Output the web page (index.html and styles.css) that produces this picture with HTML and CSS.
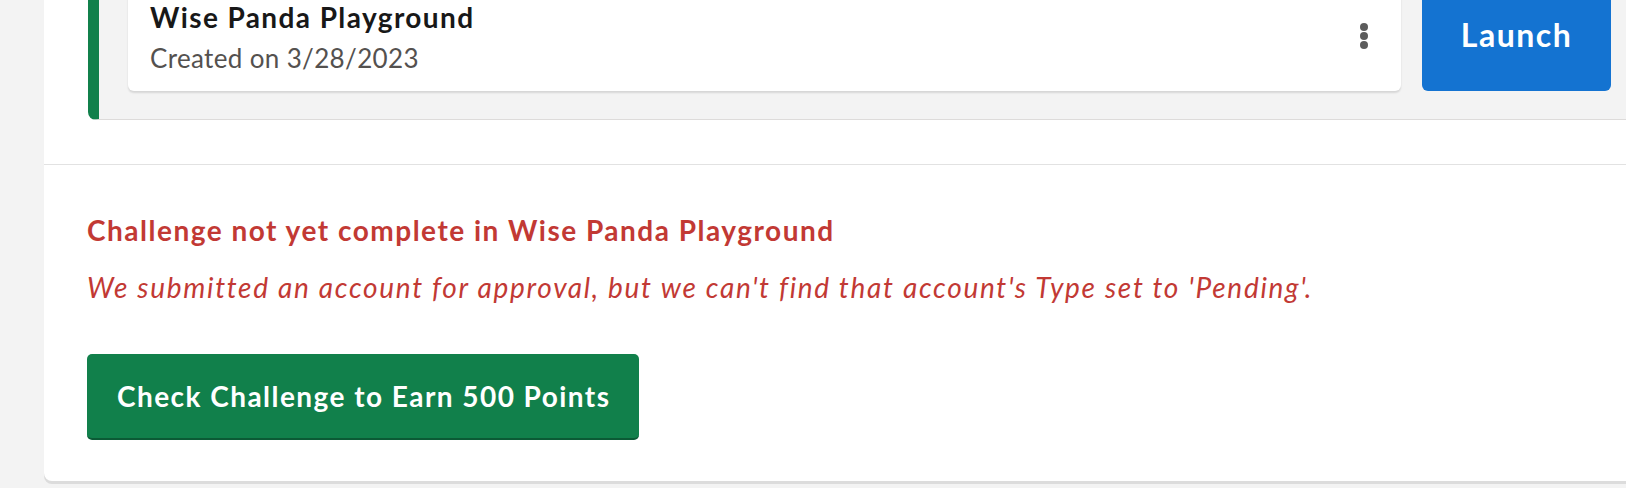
FILE: index.html
```html
<!DOCTYPE html>
<html lang="en">
<head>
<meta charset="utf-8">
<title>Challenge</title>
<link rel="stylesheet" href="styles.css">
</head>
<body>
<div class="card">
  <section class="org-section">
    <div class="org">
      <div class="org-card">
        <div class="org-info">
          <div class="org-name">Wise Panda Playground</div>
          <div class="org-date">Created on 3/28/2023</div>
        </div>
        <button class="kebab" aria-label="More actions"><span></span><span></span><span></span></button>
      </div>
      <button class="launch">Launch</button>
    </div>
  </section>
  <section class="check-section">
    <h3 class="err-title">Challenge not yet complete in Wise Panda Playground</h3>
    <p class="err-msg">We submitted an account for approval, but we can't find that account's Type set to 'Pending'.</p>
    <button class="check-btn">Check Challenge to Earn 500 Points</button>
  </section>
</div>
</body>
</html>
```
FILE: styles.css
```css
html, body {
  margin: 0;
  background: #f3f3f3;
  overflow: hidden;
}
body {
  font-family: Lato, "Noto Sans", sans-serif;
  height: 488px;
}
.card {
  margin: -48px 0 0 44px;
  width: 1640px;
  background: #fff;
  border-radius: 0 0 8px 8px;
  box-shadow: 0 3px 0 #dcdcdc;
}
.org-section {
  padding: 0 0 44px 44px;
  border-bottom: 1px solid #e2e2e2;
}
.org {
  display: flex;
  gap: 21px;
  background: #f3f3f3;
  border: 1px solid #dddbda;
  border-left: 11px solid #11804b;
  border-radius: 0 0 0 8px;
  padding: 28px 28px 28px 29px;
}
.org-card {
  flex: 0 0 1273px;
  height: 110px;
  box-sizing: border-box;
  background: #fff;
  border-radius: 6px;
  box-shadow: 0 2px 2px rgba(0, 0, 0, 0.12);
  display: flex;
  justify-content: space-between;
  align-items: center;
  padding: 0 33px 0 22px;
}
.org-info {
  align-self: flex-start;
  padding-top: 18px;
}
.org-name {
  font-weight: 700;
  font-size: 28px;
  line-height: 36px;
  letter-spacing: 1.4px;
  color: #181818;
}
.org-date {
  margin-top: 5px;
  font-size: 26px;
  line-height: 36px;
  letter-spacing: 0.35px;
  color: #54514f;
}
.kebab {
  display: flex;
  flex-direction: column;
  gap: 1px;
  padding: 0;
  border: 0;
  background: none;
}
.kebab span {
  width: 8px;
  height: 8px;
  border-radius: 50%;
  background: #5c5c5c;
}
.launch {
  flex: 0 0 189px;
  height: 110px;
  border: 0;
  border-radius: 6px;
  background: #1473d1;
  color: #fff;
  font-family: inherit;
  font-weight: 700;
  font-size: 32px;
  letter-spacing: 1.5px;
  padding: 0 0 4px;
}
.check-section {
  padding: 47px 0 41px 43px;
}
.err-title {
  margin: 0;
  font-weight: 700;
  font-size: 28px;
  line-height: 36px;
  letter-spacing: 1.5px;
  color: #c23934;
}
.err-msg {
  margin: 21px 0 0;
  font-style: italic;
  font-size: 28px;
  line-height: 36px;
  letter-spacing: 1.7px;
  color: #c23934;
}
.check-btn {
  display: block;
  margin-top: 49px;
  height: 86px;
  box-sizing: border-box;
  padding: 0 28px 0 30px;
  border: 0;
  border-bottom: 2px solid #0b5a35;
  border-radius: 5px;
  background: #11804b;
  color: #fff;
  font-family: inherit;
  font-weight: 700;
  font-size: 28px;
  line-height: 36px;
  letter-spacing: 1.45px;
}
```
